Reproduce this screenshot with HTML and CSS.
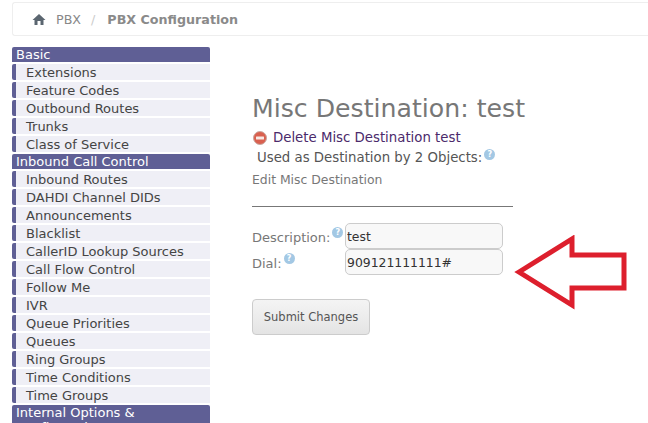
FILE: index.html
```html
<!DOCTYPE html>
<html lang="en">
<head>
<meta charset="utf-8">
<title>Misc Destination</title>
<link rel="stylesheet" href="styles.css">
</head>
<body>
<nav class="crumbs">
  <svg class="home" width="14" height="12" viewBox="0 0 14 12"><path d="M7 1 L13.5 7 H11.5 V12 H8.5 V8 H5.5 V12 H2.5 V7 H.5 Z" fill="#5b6670"/></svg>
  <span class="crumb">PBX</span>
  <span class="sep">/</span>
  <span class="crumb-active">PBX Configuration</span>
</nav>
<div class="layout">
  <aside class="sidebar">
    <div class="head">Basic</div>
    <a class="item">Extensions</a>
    <a class="item">Feature Codes</a>
    <a class="item">Outbound Routes</a>
    <a class="item">Trunks</a>
    <a class="item">Class of Service</a>
    <div class="head">Inbound Call Control</div>
    <a class="item">Inbound Routes</a>
    <a class="item">DAHDI Channel DIDs</a>
    <a class="item">Announcements</a>
    <a class="item">Blacklist</a>
    <a class="item">CallerID Lookup Sources</a>
    <a class="item">Call Flow Control</a>
    <a class="item">Follow Me</a>
    <a class="item">IVR</a>
    <a class="item">Queue Priorities</a>
    <a class="item">Queues</a>
    <a class="item">Ring Groups</a>
    <a class="item">Time Conditions</a>
    <a class="item">Time Groups</a>
    <div class="head">Internal Options &amp; Configuration</div>
  </aside>
  <main class="content">
    <h2 class="title">Misc Destination: test</h2>
    <a class="delete">
      <svg width="14" height="14" viewBox="0 0 14 14"><circle cx="7" cy="7" r="6.5" fill="#d9604f"/><circle cx="7" cy="7" r="6.5" fill="none" stroke="#c9a8a0" stroke-width="1"/><rect x="3" y="5.5" width="8" height="3" rx=".5" fill="#f7e8e4"/></svg>
      Delete Misc Destination test
    </a>
    <div class="used">Used as Destination by 2 Objects:<span class="help">?</span></div>
    <div class="section">Edit Misc Destination</div>
    <hr class="rule">
    <form class="form">
      <label class="label">Description:<span class="help help-high">?</span></label>
      <input class="field" value="test">
      <label class="label">Dial:<span class="help help-high">?</span></label>
      <input class="field" value="909121111111#">
    </form>
    <button class="submit" type="button">Submit Changes</button>
  </main>
</div>
<svg class="arrow" width="120" height="78" viewBox="0 0 120 78"><path d="M5 37 L58 4 V20 H110 V53 H58 V70 Z" fill="none" stroke="#dd1f2d" stroke-width="5" stroke-linejoin="miter"/></svg>
</body>
</html>
```
FILE: styles.css
```css
html, body {
  margin: 0;
  height: 423px;
  overflow: hidden;
  background: #fff;
}
body {
  font-family: "DejaVu Sans", Verdana, sans-serif;
  font-size: 13px;
  color: #555;
  position: relative;
}
.crumbs {
  display: flex;
  align-items: center;
  height: 32px;
  margin: 2px 0 0 12px;
  padding-left: 19px;
  border: 1px solid #eee;
  border-right: 0;
  border-radius: 3px 0 0 3px;
  font-size: 12.7px;
  color: #888;
}
.home { margin-right: 10px; }
.sep { margin: 0 12px 0 10px; color: #ccc; }
.crumb-active { font-weight: 700; color: #8a8a8a; }
.layout {
  display: flex;
  margin: 11px 0 0 12px;
}
.sidebar {
  width: 198px;
  flex: none;
  display: flex;
  flex-direction: column;
  gap: 2px;
}
.head {
  background: #5f5f95;
  color: #fff;
  padding-left: 4px;
  line-height: 15px;
  min-height: 15px;
  border-radius: 2px 2px 0 0;
}
.item {
  display: block;
  box-sizing: border-box;
  height: 16px;
  padding: 1px 0 0 10px;
  line-height: 16px;
  background: #efeff6;
  border-left: 4px solid #5f5f95;
  border-radius: 2px 0 0 2px;
  color: #444;
}
.content {
  margin-left: 42px;
  width: 300px;
}
.title {
  margin: 47px 0 0;
  font-size: 25.2px;
  font-weight: 400;
  line-height: 30px;
  color: #777;
  white-space: nowrap;
}
.delete {
  display: flex;
  align-items: center;
  gap: 6px;
  margin: 6px 0 0 1px;
  font-size: 13.3px;
  line-height: 16px;
  color: #4b2a6b;
  white-space: nowrap;
}
.used {
  margin: 3px 0 0 5px;
  font-size: 13.3px;
  line-height: 16px;
  white-space: nowrap;
}
.help {
  display: inline-block;
  width: 11px;
  height: 11px;
  margin-left: 2px;
  border-radius: 50%;
  background: #a3c8e4;
  color: #fff;
  font-size: 8px;
  font-weight: 700;
  line-height: 11px;
  text-align: center;
  vertical-align: 5px;
}
.help-high { vertical-align: 7px; }
.section {
  margin-top: 6px;
  font-size: 12.4px;
  line-height: 16px;
  color: #777;
}
.rule {
  width: 261px;
  margin: 18px 0 0;
  border: 0;
  border-top: 1px solid #777;
}
.form {
  display: grid;
  grid-template-columns: 93px 158px;
  margin-top: 16px;
  align-items: center;
}
.label {
  color: #777;
  white-space: nowrap;
}
.field {
  box-sizing: border-box;
  width: 158px;
  height: 26px;
  padding: 0 1px;
  border: 1px solid #ccc;
  border-radius: 5px;
  background: #f8f8f8;
  font: 12.4px "DejaVu Sans", sans-serif;
  color: #333;
}
.submit {
  display: block;
  box-sizing: border-box;
  width: 118px;
  height: 36px;
  margin-top: 24px;
  border: 1px solid #ccc;
  border-radius: 4px;
  background: linear-gradient(#f4f4f4, #e4e4e4);
  font: 11.5px "DejaVu Sans", sans-serif;
  color: #555;
}
.arrow {
  position: absolute;
  left: 514px;
  top: 235px;
}
```
